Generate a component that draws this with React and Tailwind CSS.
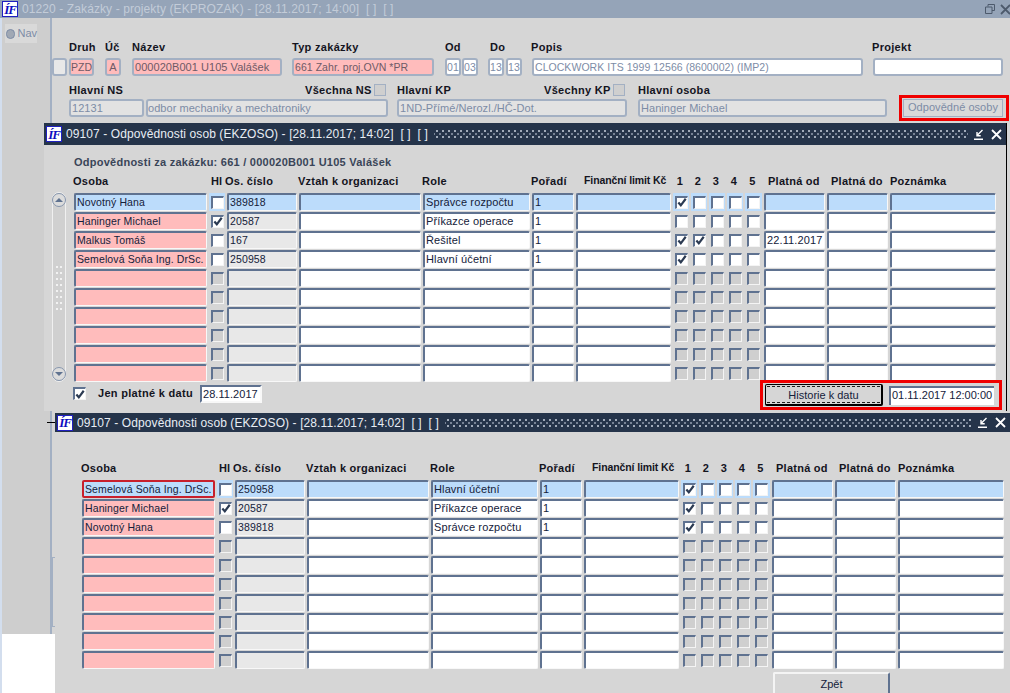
const font = { fontFamily: '"Liberation Sans", Arial, sans-serif' };

// one table row of the "Odpovědnosti" block: [osoba, hl, cislo, role, poradi, od, checks]
const firstRows = [
  ['Novotný Hana', false, '389818', 'Správce rozpočtu', '1', '', [1, 0, 0, 0, 0]],
  ['Haninger Michael', true, '20587', 'Příkazce operace', '1', '', [0, 0, 0, 0, 0]],
  ['Malkus Tomáš', false, '167', 'Řešitel', '1', '22.11.2017', [1, 1, 0, 0, 0]],
  ['Semelová Soňa Ing. DrSc.', false, '250958', 'Hlavní účetní', '1', '', [1, 0, 0, 0, 0]],
];
const secondRows = [
  ['Semelová Soňa Ing. DrSc.', false, '250958', 'Hlavní účetní', '1', '', [1, 0, 0, 0, 0]],
  ['Haninger Michael', true, '20587', 'Příkazce operace', '1', '', [1, 0, 0, 0, 0]],
  ['Novotný Hana', false, '389818', 'Správce rozpočtu', '1', '', [1, 0, 0, 0, 0]],
];

const gridCols =
  'grid grid-cols-[133px_16px_70px_122px_107px_42px_95px_16px_16px_16px_16px_17px_61px_61px_106px] gap-x-[2px]';

function Logo() {
  return (
    <span className="w-[16px] h-[16px] shrink-0 bg-white border border-[#2020c0] flex items-center justify-center overflow-hidden text-[#0c0cc0] text-[13px] leading-none font-bold italic tracking-[-1px]" style={{ fontFamily: '"Liberation Serif", serif' }}>
      ÍF
    </span>
  );
}

function Check() {
  return (
    <svg className="w-[11px] h-[11px]" viewBox="0 0 11 11" fill="none" stroke="#2b3a52" strokeWidth={2.4}>
      <path d="M1.5 5.5 4.2 8.6 9.6 1.4" />
    </svg>
  );
}

function Box({ on, disabled, className = '' }) {
  const color = disabled ? 'bg-[#cfcfcf]' : 'bg-white';
  return (
    <span className={`w-[13px] h-[13px] flex items-center justify-center border-t-2 border-l-2 border-t-[#5f7290] border-l-[#5f7290] border-b border-r border-b-[#f4f4f4] border-r-[#f4f4f4] ${color} ${className}`}>
      {on ? <Check /> : null}
    </span>
  );
}

function Cell({ children, bg = 'bg-white', ring = '', size = 'text-[11px]' }) {
  return (
    <div className={`h-[18px] pl-[1px] ${size} leading-[15px] tracking-[0.12px] text-[#14213a] whitespace-nowrap overflow-hidden rounded-[2px] ${bg} ${ring || 'border-t-2 border-l-2 border-t-[#5f7290] border-l-[#5f7290] border-b border-r border-b-[#f8f8f8] border-r-[#f8f8f8]'}`}>
      {children}
    </div>
  );
}

function CheckCell({ on, disabled, blue }) {
  return (
    <div className={`h-[18px] flex items-center justify-center ${blue ? 'bg-[#bcdcfb]' : ''}`}>
      <Box on={on} disabled={disabled} />
    </div>
  );
}

function HeaderRow() {
  return (
    <div className={`${gridCols} h-[16px] text-[11px] font-bold tracking-[0.25px] text-[#14141e] whitespace-nowrap items-center`}>
      <span>Osoba</span>
      <span className="ml-[3px] tracking-normal">Hl</span>
      <span className="ml-[-1px]">Os. číslo</span>
      <span>Vztah k organizaci</span>
      <span>Role</span>
      <span>Pořadí</span>
      <span className="ml-[9px] text-[10.5px] tracking-[-0.1px]">Finanční limit Kč</span>
      <span className="text-center">1</span>
      <span className="text-center">2</span>
      <span className="text-center">3</span>
      <span className="text-center">4</span>
      <span className="text-center">5</span>
      <span className="ml-[5px]">Platná od</span>
      <span className="ml-[5px]">Platná do</span>
      <span className="ml-[1px]">Poznámka</span>
    </div>
  );
}

function Table({ rows, focused }) {
  const all = Array.from({ length: 10 }, (_, i) => rows[i]);
  return (
    <div className="flex flex-col gap-y-[1px]">
      {all.map((row, i) => {
        const blue = i === 0;
        const empty = !row;
        const rest = blue ? 'bg-[#bcdcfb]' : 'bg-white';
        return (
          <div key={i} className={gridCols}>
            <Cell
              size="text-[10.5px]"
              bg={blue ? 'bg-[#bcdcfb]' : 'bg-[#ffbcbc]'}
              ring={focused && blue ? 'border-2 border-[#c8202c]' : ''}
            >
              {row ? row[0] : ''}
            </Cell>
            <CheckCell on={row && row[1]} disabled={empty} blue={blue} />
            <Cell size="text-[10.5px]" bg={blue ? 'bg-[#bcdcfb]' : 'bg-[#e8e8e8]'}>{row ? row[2] : ''}</Cell>
            <Cell bg={rest} />
            <Cell bg={rest}>{row ? row[3] : ''}</Cell>
            <Cell bg={rest}>{row ? row[4] : ''}</Cell>
            <Cell bg={rest} />
            {[0, 1, 2, 3, 4].map((c) => (
              <CheckCell key={c} on={row && row[6][c]} disabled={empty} blue={blue} />
            ))}
            <Cell bg={rest}>{row ? row[5] : ''}</Cell>
            <Cell bg={rest} />
            <Cell bg={rest} />
          </div>
        );
      })}
    </div>
  );
}

function ActiveTitle({ text, height }) {
  return (
    <div className={`${height} bg-[#25344a] flex items-center pl-[2px] pr-[4px] text-white`}>
      <Logo />
      <span className="ml-[4px] text-[12px] tracking-[0.1px] whitespace-pre text-[#e8edf4]">{text}</span>
      <div className="flex-1 h-[10px] ml-[6px] mr-[6px] bg-[radial-gradient(circle,#a4aebc_0.7px,transparent_1px),radial-gradient(circle,#7a8698_0.7px,transparent_1px)] bg-[length:6px_6px] bg-[position:0_-1px,3px_2px]" />
      <svg className="w-[11px] h-[11px] mr-[6px]" viewBox="0 0 11 11" fill="none" stroke="white" strokeWidth={1.4}>
        <path d="M0 10.2H9M8.5 1 3 6.5M3 3V6.7H6.7" />
      </svg>
      <svg className="w-[11px] h-[11px]" viewBox="0 0 11 11" fill="none" stroke="white" strokeWidth={1.8}>
        <path d="M1 1 10 10M10 1 1 10" />
      </svg>
    </div>
  );
}

// read only field of the parent form
function Field({ w, children, bg = 'bg-[#e2e2e2]', color = 'text-[#7d8ca6]', h = 'h-[18px]', className = '' }) {
  return (
    <div className={`${w} ${h} ${bg} ${color} ${className} border-2 border-[#a3b0c3] rounded-[3px] text-[11px] leading-[14px] tracking-[0.05px] whitespace-nowrap overflow-hidden`}>
      {children}
    </div>
  );
}

function Label({ children, className = '' }) {
  return <span className={`text-[11px] font-bold tracking-[0.3px] text-[#14141e] whitespace-nowrap ${className}`}>{children}</span>;
}

function ParentForm() {
  return (
    <div className="flex-1 bg-[#d6d6d6] pt-[22px] relative">
      {/* first row */}
      <div className="flex h-[14px] items-center pl-[17px]">
        <Label className="w-[36px]">Druh</Label>
        <Label className="w-[27px]">Úč</Label>
        <Label className="w-[160px]">Název</Label>
        <Label className="w-[153px]">Typ zakázky</Label>
        <Label className="w-[45px]">Od</Label>
        <Label className="w-[41px]">Do</Label>
        <Label className="w-[341px]">Popis</Label>
        <Label>Projekt</Label>
      </div>
      <div className="flex pt-[4px]">
        <Field w="w-[15px]" bg="bg-[#e8e8e8]" />
        <Field w="w-[25px]" bg="bg-[#ffbcbc]" color="text-[#6e5a66]" className="ml-[2px] !text-[10.5px]">PZD</Field>
        <Field w="w-[16px]" bg="bg-[#ffbcbc]" color="text-[#6e5a66]" className="ml-[11px] text-center">A</Field>
        <Field w="w-[150px]" bg="bg-[#ffbcbc]" color="text-[#6e5a66]" className="ml-[11px] pl-[1px]">000020B001 U105 Valášek</Field>
        <Field w="w-[142px]" bg="bg-[#ffbcbc]" color="text-[#6e5a66]" className="ml-[10px] pl-[1px] !text-[10.5px]">661 Zahr. proj.OVN *PR</Field>
        <Field w="w-[16px]" bg="bg-white" className="ml-[11px] text-center !text-[10.5px]">01</Field>
        <Field w="w-[16px]" bg="bg-white" className="ml-[1px] text-center !text-[10.5px]">03</Field>
        <Field w="w-[16px]" bg="bg-white" className="ml-[10px] text-center !text-[10.5px]">13</Field>
        <Field w="w-[16px]" bg="bg-white" className="ml-[2px] text-center !text-[10.5px]">13</Field>
        <Field w="w-[331px]" bg="bg-white" className="ml-[10px] pl-[1px] !text-[10.5px]">CLOCKWORK ITS 1999 12566 (8600002) (IMP2)</Field>
        <Field w="w-[130px]" bg="bg-white" className="ml-[10px]" />
      </div>
      {/* second row */}
      <div className="flex h-[16px] items-center pl-[17px] mt-[6px]">
        <Label className="w-[236px]">Hlavní NS</Label>
        <Label className="w-[69px]">Všechna NS</Label>
        <span className="w-[12px] h-[12px] bg-[#cfcfcf] border border-[#a3b0c3]" />
        <Label className="ml-[11px] w-[147px]">Hlavní KP</Label>
        <Label className="w-[69px]">Všechny KP</Label>
        <span className="w-[12px] h-[12px] bg-[#cfcfcf] border border-[#a3b0c3]" />
        <Label className="ml-[13px]">Hlavní osoba</Label>
      </div>
      <div className="flex pt-[1px] pl-[17px]">
        <Field w="w-[75px]" className="pl-[1px]">12131</Field>
        <Field w="w-[242px]" className="ml-[2px]">odbor mechaniky a mechatroniky</Field>
        <Field w="w-[230px]" className="ml-[9px] pl-[1px]">1ND-Přímé/Nerozl./HČ-Dot.</Field>
        <Field w="w-[249px]" className="ml-[11px] pl-[1px]">Haninger Michael</Field>
        <div className="ml-[12px] border-[3px] border-[#f00000] p-[1px] -mt-[4px] h-[26px] w-[110px]">
          <div className="h-[18px] w-[100px] bg-[#d9d9d9] border border-[#a3b0c3] text-[#7d8ca6] text-[11px] tracking-[0.05px] text-center leading-[14px] whitespace-nowrap">
            Odpovědné osoby
          </div>
        </div>
      </div>
    </div>
  );
}

function Scrollbar() {
  return (
    <div className="w-[14px] h-[190px] mt-[-1px] rounded-[7px] bg-[#d0d0d0] border border-[#f0f0f0] flex flex-col items-center justify-between">
      <span className="w-[14px] h-[14px] rounded-full border border-[#8695ad] bg-[#dcdcdc] flex items-center justify-center">
        <span className="w-0 h-0 border-x-[4px] border-x-transparent border-b-[4px] border-b-[#5f7290]" />
      </span>
      <span className="w-[8px] h-[46px] bg-[radial-gradient(circle,#f2f2f2_0.8px,transparent_1px)] bg-[length:4px_6px]" />
      <span className="w-[14px] h-[14px] rounded-full border border-[#8695ad] bg-[#dcdcdc] flex items-center justify-center">
        <span className="w-0 h-0 border-x-[4px] border-x-transparent border-t-[4px] border-t-[#5f7290]" />
      </span>
    </div>
  );
}

function WindowOne() {
  return (
    <div className="absolute left-[44px] top-[123px] w-[963px] h-[288px] bg-[#d6d6d6] border-r border-r-black">
      <ActiveTitle text="09107 - Odpovědnosti osob (EKZOSO) - [28.11.2017; 14:02]  [ ]  [ ]" height="h-[22px]" />
      <div className="pl-[30px] pt-[9px] h-[17px] text-[11px] font-bold tracking-[0.25px] text-[#3a4558] whitespace-nowrap leading-[16px]">
        Odpovědnosti za zakázku: 661 / 000020B001 U105 Valášek
      </div>
      <div className="pl-[29px] pt-[11px]">
        <HeaderRow />
      </div>
      <div className="flex pl-[8px] pt-[4px]">
        <Scrollbar />
        <div className="ml-[8px]">
          <Table rows={firstRows} />
        </div>
      </div>
      <div className="flex pl-[29px] pt-[3px] items-start">
        <Box on className="mt-[2px]" />
        <span className="ml-[12px] mt-[2px] text-[11px] font-bold tracking-[0.3px] text-[#14141e] whitespace-nowrap w-[102px] leading-[12px]">Jen platné k datu</span>
        <Field w="w-[62px]" bg="bg-white" color="text-[#14213a]" h="h-[18px]" className="pl-[1px] !border-t-[#5f7290] !border-l-[#5f7290] !border-b-[#f8f8f8] !border-r-[#f8f8f8] !rounded-none">28.11.2017</Field>
        <div className="ml-[498px] -mt-[5px] w-[242px] h-[30px] border-[3px] border-[#f00000] flex items-center pl-[2px]">
          <div className="w-[118px] h-[22px] bg-[#d6d6d6] border border-black border-b-2 border-r-2 rounded-[2px] p-[1px] shrink-0">
            <div className="h-full border-y border-dashed border-[#222] text-center text-[11px] leading-[16px] text-[#14213a]">Historie k datu</div>
          </div>
          <div className="ml-[6px] w-[105px] h-[19px] bg-white border-t-2 border-l-2 border-t-[#5f7290] border-l-[#5f7290] pl-[1px] text-[11px] leading-[15px] text-[#14213a] whitespace-nowrap">01.11.2017 12:00:00</div>
        </div>
      </div>
    </div>
  );
}

function WindowTwo() {
  return (
    <div className="absolute left-[55px] top-[413px] w-[955px] h-[280px] bg-[#d6d6d6]">
      <ActiveTitle text="09107 - Odpovědnosti osob (EKZOSO) - [28.11.2017; 14:02]  [ ]  [ ]" height="h-[19px]" />
      <div className="pl-[26px] pt-[28px]">
        <HeaderRow />
      </div>
      <div className="pl-[27px] pt-[4px]">
        <Table rows={secondRows} focused />
      </div>
      <div className="ml-[718px] mt-[3px] w-[117px] h-[30px] bg-[#d6d6d6] border-t-2 border-l-2 border-r-2 border-t-[#f4f4f4] border-l-[#f4f4f4] border-r-[#5f7290] rounded-t-[2px] text-center text-[11px] leading-[20px] text-[#14213a]">
        Zpět
      </div>
    </div>
  );
}

export default function App() {
  return (
    <div className="relative w-[1010px] h-[693px] overflow-hidden bg-[#d6d6d6] flex flex-col" style={font}>
      {/* parent window title */}
      <div className="h-[18px] bg-[#95a4b8] flex items-center pl-[2px] pr-0 shrink-0">
        <Logo />
        <span className="ml-[4px] text-[12px] tracking-[0.1px] text-[#c3ccd8] whitespace-pre">
          {'01220 - Zakázky - projekty (EKPROZAK) - [28.11.2017; 14:00]  [ ]  [ ]'}
        </span>
        <svg className="ml-auto w-[10px] h-[10px] mr-[5px]" viewBox="0 0 10 10" fill="none" stroke="#4d5a6c" strokeWidth={1}>
          <path d="M3 2.5V.5H9.5V6.5H7M.5 3H7V9.5H.5Z" />
        </svg>
        <svg className="w-[11px] h-[11px] -mr-[1px]" viewBox="0 0 11 11" fill="none" stroke="#4d5a6c" strokeWidth={1.8}>
          <path d="M1 1 10 10M10 1 1 10" />
        </svg>
      </div>

      <div className="flex flex-1 min-h-0">
        <div className="w-[2px] bg-[#d3deee] shrink-0" />
        {/* navigator strip */}
        <div className="w-[48px] shrink-0 flex flex-col">
          <div className="h-[616px] bg-[#cecece] pt-[6px] rounded-tr-[2px]">
            <div className="ml-[3px] w-[32px] h-[19px] bg-[#d9d9d9] flex items-center">
              <span className="ml-[1px] w-[10px] h-[10px] rounded-full bg-[#a0a8b4] border border-[#7d8ca6]" />
              <span className="ml-[2px] text-[11px] text-[#7d8ca6]">Nav</span>
            </div>
          </div>
          <div className="flex-1 bg-white" />
        </div>
        <div className="w-[2px] h-[616px] bg-[#a3b0c3] shrink-0" />
        <ParentForm />
      </div>

      <WindowOne />
      <WindowTwo />
      <div className="absolute left-[2px] top-[634px] w-[53px] h-[59px] bg-white" />
      <div className="absolute left-[47px] top-[422px] w-[8px] h-[1px] bg-black" />
      {/* splitter handle left of the lower window */}
      <div className="absolute left-[52px] top-[557px] w-[3px] h-[70px] bg-[#d6d6d6] border-l border-y border-[#a3b0c3]" />
    </div>
  );
}
